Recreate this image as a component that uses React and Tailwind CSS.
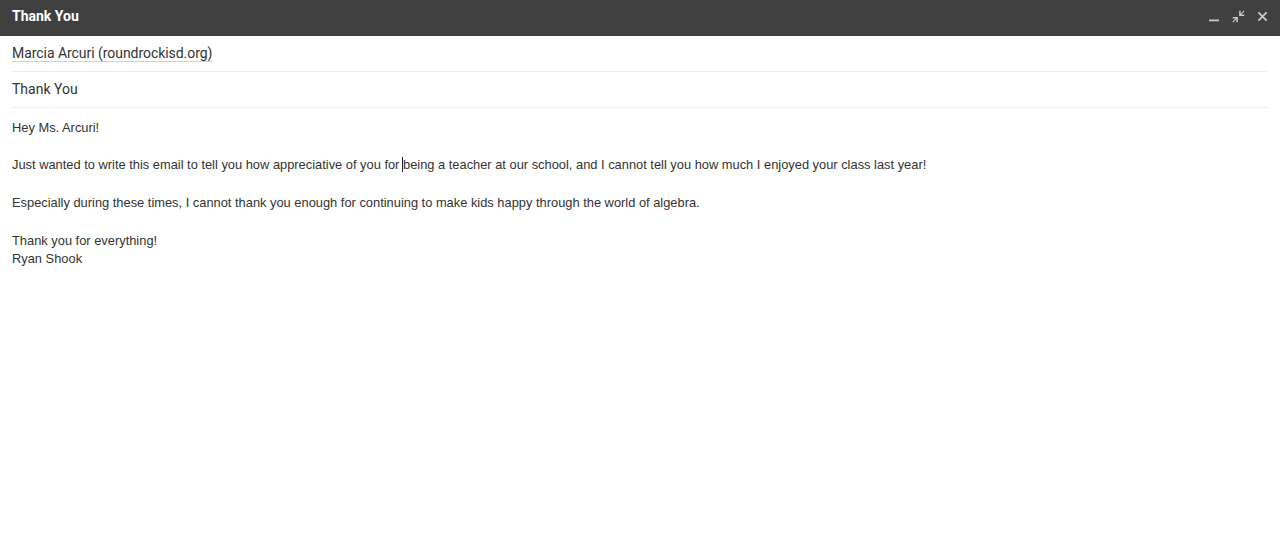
import React from "react";

const MinimizeIcon = () => (
  <svg width="12" height="12" viewBox="0 0 12 12">
    <rect x="1" y="9.5" width="10" height="1.8" fill="#c8c8c8" />
  </svg>
);

const ExitFullIcon = () => (
  <svg width="13" height="13" viewBox="0 0 12 12" fill="#c8c8c8">
    <path d="M6.6 0.8h1.4v2.6L10.9 0.5 11.6 1.2 8.7 4.1h2.6v1.4H6.6z" />
    <path d="M5.4 11.2H4V8.6L1.1 11.5 0.4 10.8 3.3 7.9H0.7V6.5h4.7z" />
  </svg>
);

const CloseIcon = () => (
  <svg width="11" height="11" viewBox="0 0 12 12">
    <path d="M1.5 1.5l9 9M10.5 1.5l-9 9" stroke="#c8c8c8" strokeWidth="2" />
  </svg>
);

export default function App() {
  return (
    <div className="w-[1280px] h-[560px] bg-white overflow-hidden">
      {/* HEADER */}
      <div className="h-[36px] bg-[#404040] flex items-center justify-between pl-3 pr-[12px]">
        <span className="text-white text-[14px] font-bold font-['Roboto',sans-serif] -mt-[3px]">
          Thank You
        </span>
        <div className="flex items-center gap-[12px] -mt-[4px]">
          <span className="ml-[2px]"><MinimizeIcon /></span>
          <ExitFullIcon />
          <CloseIcon />
        </div>
      </div>

      {/* FIELDS */}
      <div className="px-3 font-['Roboto',sans-serif] text-[14px] text-[#333]">
        <div className="h-[36px] flex items-center border-b border-[#ececec] mr-[1px] pb-[1px]">
          <span className="border-b border-[#fbd25e] leading-[16px] pt-[1px] tracking-[-0.05px]">
            Marcia Arcuri (roundrockisd.org)
          </span>
        </div>
        <div className="h-[36px] flex items-center border-b border-[#ececec]">
          <span>Thank You</span>
        </div>
      </div>

      {/* BODY */}
      <div className="px-3 pt-[10px] font-['Liberation_Sans',Arial,sans-serif] text-[12.87px] leading-[19px] text-[#333]">
        <div>Hey Ms. Arcuri!</div>
        <div className="h-[18px]" />
        <div>
          Just wanted to write this email to tell you how appreciative of you for{" "}
          <span className="border-l border-[#222] -ml-[1px]">being</span> a teacher
          at our school, and I cannot tell you how much I enjoyed your class last
          year!
        </div>
        <div className="h-[19px]" />
        <div>
          Especially during these times, I cannot thank you enough for continuing
          to make kids happy through the world of algebra.
        </div>
        <div className="h-[19px]" />
        <div>Thank you for everything!</div>
        <div className="-mt-[1px]">Ryan Shook</div>
      </div>
    </div>
  );
}
